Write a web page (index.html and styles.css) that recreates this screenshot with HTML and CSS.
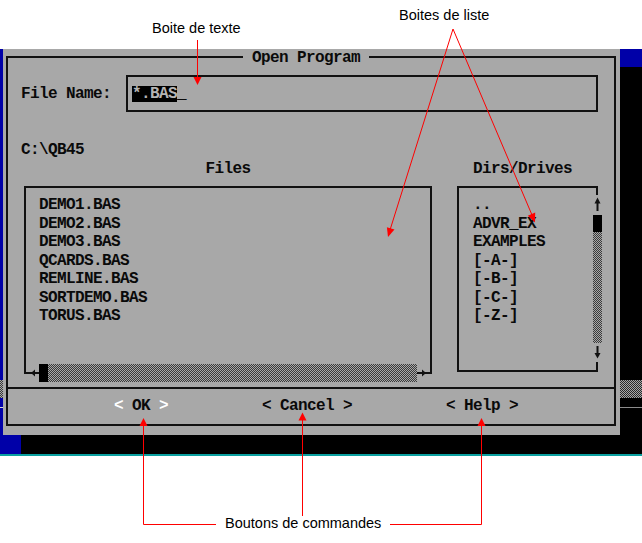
FILE: index.html
```html
<!DOCTYPE html>
<html lang="fr">
<head>
<meta charset="utf-8">
<title>Open Program</title>
<link rel="stylesheet" href="styles.css">
</head>
<body>
<div class="page">
  <div class="screen">
    <div class="screen-main">
      <div class="edge edge-left">
        <div class="seg seg-a"></div>
        <div class="seg seg-dither"></div>
        <div class="seg seg-b"></div>
        <div class="seg seg-line"></div>
        <div class="seg seg-rest"></div>
      </div>
      <div class="dialog">
        <div class="frame">
          <div class="title">Open Program</div>
          <div class="filename-row">
            <span class="label">File Name:</span>
            <div class="textbox"><span class="sel">*.BAS</span><span class="cursor">_</span></div>
          </div>
          <div class="path">C:\QB45</div>
          <div class="lists">
            <div class="heading heading-files">Files</div>
            <div class="heading heading-dirs">Dirs/Drives</div>
            <div class="listbox files">
              <ul class="items">
                <li>DEMO1.BAS</li>
                <li>DEMO2.BAS</li>
                <li>DEMO3.BAS</li>
                <li>QCARDS.BAS</li>
                <li>REMLINE.BAS</li>
                <li>SORTDEMO.BAS</li>
                <li>TORUS.BAS</li>
              </ul>
              <div class="hscroll">
                <svg class="hs-end" width="15" height="18" viewBox="0 0 15 18"><path d="M0 9H15" stroke="#111" stroke-width="2"/><path d="M7 9L11 5.5V12.5Z" fill="#111"/></svg>
                <div class="thumb-h"></div>
                <div class="dither"></div>
                <svg class="hs-end" width="15" height="18" viewBox="0 0 15 18"><path d="M0 9H15" stroke="#111" stroke-width="2"/><path d="M9 9L5 5.5V12.5Z" fill="#111"/></svg>
              </div>
            </div>
            <div class="listbox dirs">
              <ul class="items">
                <li>..</li>
                <li>ADVR_EX</li>
                <li>EXAMPLES</li>
                <li>[-A-]</li>
                <li>[-B-]</li>
                <li>[-C-]</li>
                <li>[-Z-]</li>
              </ul>
              <div class="vscroll">
                <div class="stub stub-top"></div>
                <svg class="vs-arrow" width="9" height="18.5" viewBox="0 0 9 18.5"><path d="M4.5 8V16" stroke="#111" stroke-width="2"/><path d="M4.5 2.5L1.5 8.5H7.5Z" fill="#111"/></svg>
                <div class="thumb-v"></div>
                <div class="dither"></div>
                <svg class="vs-arrow" width="9" height="18.5" viewBox="0 0 9 18.5"><path d="M4.5 3V10.5" stroke="#111" stroke-width="2"/><path d="M1.5 10H7.5L4.5 15.5Z" fill="#111"/></svg>
                <div class="stub stub-bottom"></div>
              </div>
            </div>
          </div>
          <div class="buttons">
            <span class="btn default"><span class="br">&lt;</span> OK <span class="br">&gt;</span></span>
            <span class="btn">&lt; Cancel &gt;</span>
            <span class="btn">&lt; Help &gt;</span>
          </div>
        </div>
      </div>
      <div class="edge edge-right">
        <div class="seg seg-a"></div>
        <div class="seg seg-black"></div>
        <div class="seg seg-dither"></div>
        <div class="seg seg-b"></div>
        <div class="seg seg-line"></div>
        <div class="seg seg-rest"></div>
      </div>
    </div>
    <div class="statusbar"><div class="status-blue"></div></div>
    <div class="teal"></div>
  </div>

  <div class="annotations">
    <svg class="arrows" width="642" height="543" viewBox="0 0 642 543">
      <g stroke="#f00" stroke-width="1" fill="none">
        <path d="M197.5 40V78"/>
        <path d="M453 29L390 230"/>
        <path d="M453 29L532 215"/>
        <path d="M143.5 425V524.5H216"/>
        <path d="M302.5 420V516"/>
        <path d="M481.5 425V524.5H390"/>
      </g>
      <g fill="#f00">
        <polygon points="197.5,85 193.5,77 201.5,77"/>
        <polygon points="388,237 394.5,229.6 386.9,227.2"/>
        <polygon points="535,222.5 535.2,212.6 527.8,215.8"/>
        <polygon points="143.5,418 139.5,426 147.5,426"/>
        <polygon points="302.5,412.5 298.5,420.5 306.5,420.5"/>
        <polygon points="481.5,418 477.5,426 485.5,426"/>
      </g>
    </svg>
    <div class="note note-text">Boite de texte</div>
    <div class="note note-list">Boites de liste</div>
    <div class="note note-buttons">Boutons de commandes</div>
  </div>
</div>
</body>
</html>
```

FILE: styles.css
```css
* {
  box-sizing: border-box;
  margin: 0;
  padding: 0;
}

html,
body {
  background: #fff;
}

body {
  width: 642px;
  height: 543px;
  overflow: hidden;
}

.page {
  position: relative;
  height: 543px;
  padding-top: 49px;
  font-family: "Liberation Mono", "DejaVu Sans Mono", monospace;
  font-size: 16px;
  letter-spacing: -0.6px;
  font-weight: bold;
  color: #0a0a0a;
}

.screen {
  display: flex;
  flex-direction: column;
  width: 642px;
}

.screen-main {
  display: flex;
  height: 386px;
}

/* ---------- screen edges (underlying editor) ---------- */
.edge {
  display: flex;
  flex-direction: column;
}

.edge-left {
  width: 3px;
  background: #0000a8;
}

.edge-left .seg-a {
  height: 331px;
}

.edge-left .seg-dither {
  height: 18px;
  background: repeating-conic-gradient(#3a3a3a 0% 25%, #a8a8a8 0% 50%) 0 0 / 2px 2px;
}

.edge-left .seg-b {
  height: 8.5px;
}

.edge-left .seg-line {
  height: 1px;
  background: #d8d8d8;
}

.edge-left .seg-rest {
  flex: 1;
}

.edge-right {
  width: 22px;
  background: #000;
}

.edge-right .seg-a {
  height: 18px;
  background: #0000a8;
}

.edge-right .seg-black {
  flex: 1;
}

.edge-right .seg-dither {
  height: 18px;
  background: repeating-conic-gradient(#a8a8a8 0% 25%, #2a2a2a 0% 50%) 0 0 / 2px 2px;
}

.edge-right .seg-b {
  height: 9px;
}

.edge-right .seg-line {
  height: 1px;
  background: #8c8c8c;
}

.edge-right .seg-rest {
  height: 27.5px;
}

/* ---------- dialog ---------- */
.dialog {
  width: 617px;
  background: #a8a8a8;
  padding: 7px 4px 9px 3px;
  display: flex;
}

.frame {
  flex: 1;
  border: 2px solid #111;
  display: flex;
  flex-direction: column;
}

.title {
  align-self: flex-start;
  margin-top: -9px;
  margin-left: 235px;
  padding: 0 9px;
  height: 17px;
  line-height: 18px;
  background: #a8a8a8;
}

.filename-row {
  display: flex;
  align-items: center;
  margin-top: 9px;
  height: 37px;
  padding-left: 13px;
}

.label {
  width: 105px;
  line-height: 18px;
  padding-top: 1px;
}

.textbox {
  width: 472px;
  height: 37px;
  border: 2px solid #111;
  display: flex;
  align-items: center;
  padding-left: 4px;
}

.sel {
  background: #000;
  color: #b4b4b4;
  height: 16px;
  line-height: 17px;
}

.cursor {
  line-height: 17px;
  height: 16px;
}

.path {
  margin-top: 29px;
  padding-left: 13px;
  height: 18.5px;
  line-height: 19.5px;
}

.lists {
  display: grid;
  grid-template-columns: 408px 141px;
  grid-template-rows: 18.5px 185.5px;
  column-gap: 25px;
  row-gap: 8px;
  margin-left: 16px;
}

.heading {
  line-height: 19.5px;
}

.heading-files {
  text-align: center;
}

.heading-dirs {
  padding-left: 16px;
}

.listbox {
  border: 2px solid #111;
  display: flex;
}

.items {
  list-style: none;
  line-height: 18.5px;
  padding-top: 8px;
}

.items li {
  white-space: nowrap;
  height: 18.5px;
}

.files {
  flex-direction: column;
  border-bottom: none;
}

.files .items {
  flex: 1;
  padding-left: 13px;
}

.hscroll {
  display: flex;
  height: 18px;
  margin: 0 -2px -10px;
}

.hs-end {
  flex: none;
  display: block;
}

.thumb-h {
  width: 9px;
  background: #000;
}

.dither {
  flex: 1;
  background: repeating-conic-gradient(#3a3a3a 0% 25%, #a8a8a8 0% 50%) 0 0 / 2px 2px;
}

.dirs {
  border-right: none;
}

.dirs .items {
  flex: 1;
  padding-left: 14px;
}

.vscroll {
  flex: none;
  width: 9px;
  margin: -2px -3.5px -2px 0;
  display: flex;
  flex-direction: column;
}

.stub {
  flex: none;
  width: 2px;
  margin: 0 auto;
  background: #111;
}

.stub-top {
  height: 9px;
}

.stub-bottom {
  height: 10px;
}

.vs-arrow {
  display: block;
  flex: none;
}

.thumb-v {
  flex: none;
  height: 17px;
  margin-top: 1.5px;
  background: #000;
}

.buttons {
  margin-top: auto;
  height: 37px;
  border-top: 2px solid #111;
  display: flex;
  align-items: center;
  gap: 94px;
  padding-left: 106px;
  line-height: 19px;
}

.btn {
  white-space: pre;
}

.br {
  color: #fff;
}

/* ---------- bottom of screen ---------- */
.statusbar {
  height: 19px;
  background: #000;
  display: flex;
}

.status-blue {
  width: 21px;
  background: #0000a8;
}

.teal {
  height: 2px;
  background: #0aa0a0;
}

/* ---------- callouts ---------- */
.annotations {
  position: absolute;
  inset: 0;
  pointer-events: none;
}

.arrows {
  position: absolute;
  left: 0;
  top: 0;
}

.note {
  position: absolute;
  font-family: "Liberation Sans", Arial, sans-serif;
  font-weight: normal;
  font-size: 14.5px;
  letter-spacing: 0;
  line-height: 17px;
  color: #000;
  white-space: nowrap;
}

.note-text {
  left: 152px;
  top: 20px;
}

.note-list {
  left: 399px;
  top: 7px;
}

.note-buttons {
  left: 225px;
  top: 515px;
}
```
